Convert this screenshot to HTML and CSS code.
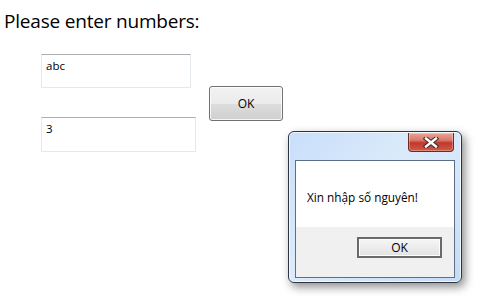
FILE: index.html
```html
<!DOCTYPE html>
<html lang="vi">
<head>
    <meta charset="UTF-8">
    <title>Please enter numbers</title>
    <link rel="stylesheet" href="styles.css">
</head>
<body>
    <h1 class="prompt">Please enter numbers:</h1>

    <!-- input form -->
    <div class="form">
        <div class="fields">
            <div class="textbox textbox-a">abc</div>
            <div class="textbox textbox-b">3</div>
        </div>
        <button class="btn">OK</button>
    </div>

    <!-- message box -->
    <div class="msgbox">
        <div class="titlebar">
            <span class="close">
                <svg width="16" height="11" viewBox="0 0 16 11">
                    <path d="M3 1.5 L13 9.5 M13 1.5 L3 9.5" stroke="#3a2a2a" stroke-width="4.4" stroke-linecap="square"/>
                    <path d="M3 1.5 L13 9.5 M13 1.5 L3 9.5" stroke="#fff" stroke-width="2.4" stroke-linecap="square"/>
                </svg>
            </span>
        </div>
        <div class="client">
            <div class="message">Xin nhập số nguyên!</div>
            <div class="actions">
                <button class="dlg-btn">OK</button>
            </div>
        </div>
    </div>
</body>
</html>
```

FILE: styles.css
```css
* {
    margin: 0;
    padding: 0;
    box-sizing: border-box;
}

body {
    font-family: 'Open Sans', 'Noto Sans', 'Liberation Sans', sans-serif;
    background: #fff;
    color: #000;
    width: 486px;
    height: 297px;
    position: relative;
    overflow: hidden;
}

.prompt {
    font-size: 19px;
    font-weight: 400;
    line-height: 26px;
    padding: 8px 0 0 4px;
    letter-spacing: -0.2px;
}

.form {
    display: flex;
    align-items: center;
    padding: 20px 0 0 41px;
}

.fields {
    display: flex;
    flex-direction: column;
    gap: 29px;
}

/* win7 style textbox */
.textbox {
    height: 34px;
    border: 1px solid #e3e9ef;
    border-top-color: #abadb3;
    padding: 4px 4px;
    font-size: 11.5px;
    line-height: 14px;
}

.textbox-a {
    width: 150px;
}

.textbox-b {
    width: 155px;
    height: 35px;
}

.btn {
    margin-left: 13px;
    width: 74px;
    height: 35px;
    border: 1px solid #707070;
    border-radius: 3px;
    background: linear-gradient(#f2f2f2 0%, #ebebeb 50%, #dddddd 51%, #cfcfcf 100%);
    box-shadow: inset 0 0 0 1px rgba(255,255,255,0.8);
    font-family: inherit;
    font-size: 12px;
    color: #000;
}

/* message box window */
.msgbox {
    position: absolute;
    left: 288px;
    top: 131px;
    width: 174px;
    height: 152px;
    border: 1px solid #2d3440;
    border-radius: 6px;
    background: linear-gradient(135deg, #c8defa 0%, #dcebfb 45%, #c5dcf7 100%);
    box-shadow: 3px 4px 10px rgba(0,0,0,0.45), inset 0 0 0 1px rgba(255,255,255,0.7);
    padding: 0 6px 4px 6px;
    display: flex;
    flex-direction: column;
}

.titlebar {
    height: 28px;
    display: flex;
    justify-content: flex-end;
    align-items: flex-start;
    padding-top: 1px;
}

.close {
    width: 46px;
    height: 19px;
    margin-right: 1px;
    border: 1px solid #6e2a22;
    border-top: none;
    border-radius: 0 0 4px 4px;
    background: linear-gradient(#e9a699 0%, #d87a6b 40%, #c0392b 55%, #cf5a48 100%);
    box-shadow: inset 0 0 0 1px rgba(255,255,255,0.3);
    display: flex;
    align-items: center;
    justify-content: center;
}

.client {
    flex: 1;
    border: 1px solid #5c6f87;
    background: #f0f0f0;
    display: flex;
    flex-direction: column;
}

.message {
    height: 66px;
    background: #fff;
    padding: 28px 0 0 11px;
    font-size: 11.8px;
    line-height: 16px;
}

.actions {
    flex: 1;
    display: flex;
    justify-content: flex-end;
    padding: 10px 12px 0 0;
}

.dlg-btn {
    width: 85px;
    height: 21px;
    border: 2px solid #6a6a6a;
    background: linear-gradient(#f6f6f6, #e2e2e2);
    box-shadow: inset 0 0 0 1px #fdfdfd;
    font-family: inherit;
    font-size: 12px;
    color: #000;
}
```
